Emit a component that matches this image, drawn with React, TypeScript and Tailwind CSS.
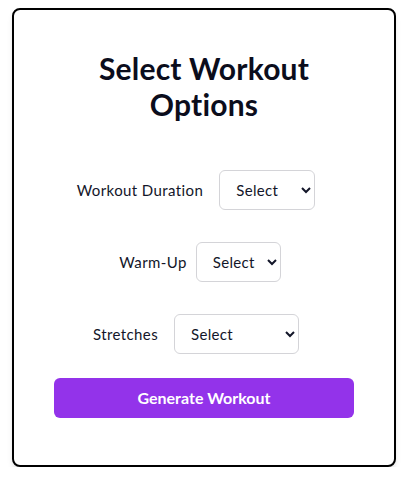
const rows = [
  { label: "Workout Duration", width: "w-[96px]", gap: "gap-4", pad: "pr-4" },
  { label: "Warm-Up", width: "w-[85px]", gap: "gap-[9px]", pad: "pr-2" },
  { label: "Stretches", width: "w-[125px]", gap: "gap-4", pad: "pr-4" },
];

export default function App() {
  return (
    <div className="pt-2 pl-3 font-['Lato',sans-serif]">
      <div className="w-[384px] h-[459px] border-2 border-black rounded-lg bg-white shadow-md pt-10 flex flex-col items-center">
        <h1 className="text-[30px] leading-[36px] font-bold text-[#0b0d1c] text-center w-[240px] tracking-[0.2px]">
          Select Workout Options
        </h1>

        <div className="mt-12 flex flex-col gap-8 w-full">
          {rows.map((r) => (
            <div key={r.label} className={`flex items-center justify-center ${r.gap} ${r.pad}`}>
              <label className="text-[15px] tracking-[0.4px] text-[#131629]">{r.label}</label>
              <select
                className={`${r.width} h-10 border border-[#d4d4d8] rounded-md pl-3 pr-1 text-[15px] tracking-[0.3px] text-[#131629] bg-white`}
                defaultValue=""
              >
                <option value="">Select</option>
              </select>
            </div>
          ))}
        </div>

        <button className="mt-6 w-[300px] h-10 rounded-md bg-[#9333ea] text-white text-[16px] font-bold">
          Generate Workout
        </button>
      </div>
    </div>
  );
}
